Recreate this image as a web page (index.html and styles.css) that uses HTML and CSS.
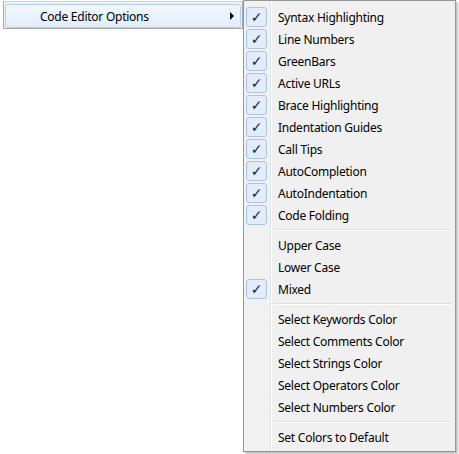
FILE: index.html
```html
<!DOCTYPE html>
<html>
<head>
<meta charset="utf-8">
<link rel="stylesheet" href="styles.css">
</head>
<body>
<div class="menu-main">
  <div class="main-item">
    <span class="main-label">Code Editor Options</span>
    <span class="arrow"></span>
  </div>
</div>
<div class="submenu">
  <div class="item"><span class="check">&#10003;</span><span class="label">Syntax Highlighting</span></div>
  <div class="item"><span class="check">&#10003;</span><span class="label">Line Numbers</span></div>
  <div class="item"><span class="check">&#10003;</span><span class="label">GreenBars</span></div>
  <div class="item"><span class="check">&#10003;</span><span class="label">Active URLs</span></div>
  <div class="item"><span class="check">&#10003;</span><span class="label">Brace Highlighting</span></div>
  <div class="item"><span class="check">&#10003;</span><span class="label">Indentation Guides</span></div>
  <div class="item"><span class="check">&#10003;</span><span class="label">Call Tips</span></div>
  <div class="item"><span class="check">&#10003;</span><span class="label">AutoCompletion</span></div>
  <div class="item"><span class="check">&#10003;</span><span class="label">AutoIndentation</span></div>
  <div class="item"><span class="check">&#10003;</span><span class="label">Code Folding</span></div>
  <div class="sep"></div>
  <div class="item"><span class="nocheck"></span><span class="label">Upper Case</span></div>
  <div class="item"><span class="nocheck"></span><span class="label">Lower Case</span></div>
  <div class="item"><span class="check">&#10003;</span><span class="label">Mixed</span></div>
  <div class="sep"></div>
  <div class="item"><span class="nocheck"></span><span class="label">Select Keywords Color</span></div>
  <div class="item"><span class="nocheck"></span><span class="label">Select Comments Color</span></div>
  <div class="item"><span class="nocheck"></span><span class="label">Select Strings Color</span></div>
  <div class="item"><span class="nocheck"></span><span class="label">Select Operators Color</span></div>
  <div class="item"><span class="nocheck"></span><span class="label">Select Numbers Color</span></div>
  <div class="sep"></div>
  <div class="item"><span class="nocheck"></span><span class="label">Set Colors to Default</span></div>
</div>
</body>
</html>
```
FILE: styles.css
```css
html, body {
  margin: 0;
  padding: 0;
  background: #ffffff;
}
body {
  font-family: "Noto Sans", "Open Sans", sans-serif;
  font-size: 12px;
  color: #000000;
  position: relative;
  width: 459px;
  height: 454px;
  overflow: hidden;
}
.menu-main {
  margin-left: 3px;
  margin-top: 1px;
  width: 240px;
  height: 28px;
  border: 1px solid #a7a7a7;
  border-top-color: #d4d4d4;
  background: linear-gradient(to right, #f1f1f1 0, #f1f1f1 29px, #e2e3e3 29px, #e2e3e3 30px, #ffffff 30px, #ffffff 31px, #f0f0f0 31px);
  box-sizing: border-box;
  padding: 2px 1px 1px 1px;
}
.main-item {
  height: 24px;
  box-sizing: border-box;
  border: 1px solid #aecff7;
  border-radius: 3px;
  background: linear-gradient(to bottom, #f2f7fd, #e2edfb);
  display: flex;
  align-items: center;
  padding-left: 34px;
}
.main-label {
  flex: 1;
  letter-spacing: -0.25px;
}
.arrow {
  width: 0;
  height: 0;
  border-top: 4px solid transparent;
  border-bottom: 4px solid transparent;
  border-left: 4px solid #000;
  margin-right: 6px;
}
.submenu {
  position: absolute;
  left: 243px;
  top: 0;
  width: 213px;
  height: 452px;
  box-sizing: border-box;
  border: 1px solid #979797;
  background: linear-gradient(to right, #f1f1f1 0, #f1f1f1 26px, #e2e3e3 26px, #e2e3e3 27px, #ffffff 27px, #ffffff 28px, #f0f0f0 28px);
  padding: 5px 2px 2px 2px;
  box-shadow: 2px 2px 2px rgba(0,0,0,0.25);
}
.item {
  height: 22px;
  display: flex;
  align-items: center;
}
.check, .nocheck {
  width: 21px;
  height: 20px;
  box-sizing: border-box;
  margin-right: 11px;
  flex: none;
}
.check {
  border: 1px solid #a5c4eb;
  border-radius: 3px;
  background: #e4ecf8;
  color: #0b1d5e;
  display: flex;
  align-items: center;
  justify-content: center;
  font-family: "DejaVu Sans", sans-serif;
  font-size: 14px;
  font-weight: bold;
  line-height: 1;
}
.label {
  letter-spacing: -0.25px;
  white-space: nowrap;
}
.sep {
  height: 8px;
  box-sizing: border-box;
  padding-top: 3px;
  margin-left: 27px;
  margin-right: 1px;
}
.sep::before {
  content: "";
  display: block;
  height: 1px;
  background: #e0e0e0;
  border-bottom: 1px solid #ffffff;
}
```
